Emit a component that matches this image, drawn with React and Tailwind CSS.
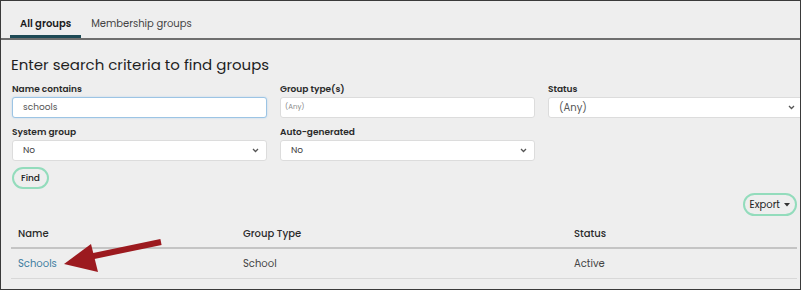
// Group search screen: tabs, search form, results table
import React from 'react';

const font = { fontFamily: 'Poppins, "Noto Sans", "Liberation Sans", sans-serif' };

const Chevron = () => (
  <svg width="7" height="5" viewBox="0 0 7 5" className="shrink-0">
    <path d="M1 1l2.5 2.5L6 1" fill="none" stroke="#555" strokeWidth="1.3" />
  </svg>
);

const Field = ({ label, children }) => (
  <div className="flex flex-col">
    <label className="text-[9px] font-semibold text-[#2a2a2a] leading-[13px] mb-[1px]">{label}</label>
    {children}
  </div>
);

const SelectBox = ({ value, big }) => (
  <div className="h-[21px] bg-white border border-[#dcdcdc] rounded-[3px] flex items-center justify-between pl-[10px] pr-[7px]">
    <span className={big ? 'text-[10px] text-[#555]' : 'text-[9px] text-[#444]'}>{value}</span>
    <Chevron />
  </div>
);

export default function App() {
  return (
    <div
      className="w-[801px] h-[290px] border border-[#3a3a3a] bg-[#eeeeee] relative overflow-hidden"
      style={font}
    >
      {/* Tabs */}
      <div className="flex pl-[9px] pt-[15px] border-b-2 border-[#6e6e6e]">
        <div className="px-[10px] pb-[4px] border-b-[3px] border-[#1e4a56] text-[10px] leading-[15px] font-semibold text-[#1a1a1a]">
          All groups
        </div>
        <div className="px-[10px] pb-[4px] text-[10px] leading-[15px] text-[#444]">Membership groups</div>
      </div>

      {/* Search form */}
      <div className="pl-[11px] pt-[15px]">
        <h1 className="text-[15px] text-[#1e1e1e] leading-[20px] -ml-[1px]">Enter search criteria to find groups</h1>
        <div className="grid grid-cols-[255px_255px_255px] gap-x-[13px] gap-y-[8px] mt-[8px]">
          <Field label="Name contains">
            <div className="h-[21px] bg-white border border-[#9cc4e4] rounded-[3px] shadow-[0_0_2px_#b8d6ee] flex items-center pl-[10px]">
              <span className="text-[9px] text-[#555]">schools</span>
            </div>
          </Field>
          <Field label="Group type(s)">
            <div className="h-[21px] bg-white border border-[#dcdcdc] rounded-[3px] flex items-center pl-[4px]">
              <span className="text-[7px] text-[#888]">(Any)</span>
            </div>
          </Field>
          <Field label="Status">
            <SelectBox value="(Any)" big />
          </Field>
          <Field label="System group">
            <SelectBox value="No" />
          </Field>
          <Field label="Auto-generated">
            <SelectBox value="No" />
          </Field>
        </div>
        <button className="mt-[6px] h-[22px] px-[7px] rounded-full border-2 border-[#93dcbc] text-[9px] font-medium text-[#222] leading-none">
          Find
        </button>
      </div>

      {/* Results */}
      <div className="px-[10px] mt-[4px] pr-[3px]">
        <div className="flex justify-end">
          <button className="h-[23px] px-[5px] rounded-full border-2 border-[#93dcbc] text-[10px] text-[#222] flex items-center gap-[4px]">
            Export
            <svg width="6" height="4" viewBox="0 0 6 4"><path d="M0 0h6L3 3.5z" fill="#333" /></svg>
          </button>
        </div>
        <div className="mt-[4px] grid grid-cols-[225px_331px_1fr] text-[10px] text-[#2a2a2a] pl-[7px] h-[29px] items-center border-b-2 border-[#c4c4c4]">
          <span className="font-medium">Name</span>
          <span className="font-medium">Group Type</span>
          <span className="font-medium">Status</span>
        </div>
        <div className="grid grid-cols-[225px_331px_1fr] text-[10px] text-[#444] pl-[7px] h-[30px] items-center border-b border-[#d8d8d8]">
          <span className="text-[#3d7da0]">Schools</span>
          <span>School</span>
          <span>Active</span>
        </div>
      </div>

      {/* Callout arrow */}
      <svg className="absolute left-0 top-0 pointer-events-none" width="801" height="290">
        <path d="M160 241 L88 256" stroke="#9c1a1f" strokeWidth="6" strokeLinecap="butt" />
        <path d="M63 263 L90 243 L97 271 Z" fill="#9c1a1f" />
      </svg>
    </div>
  );
}
